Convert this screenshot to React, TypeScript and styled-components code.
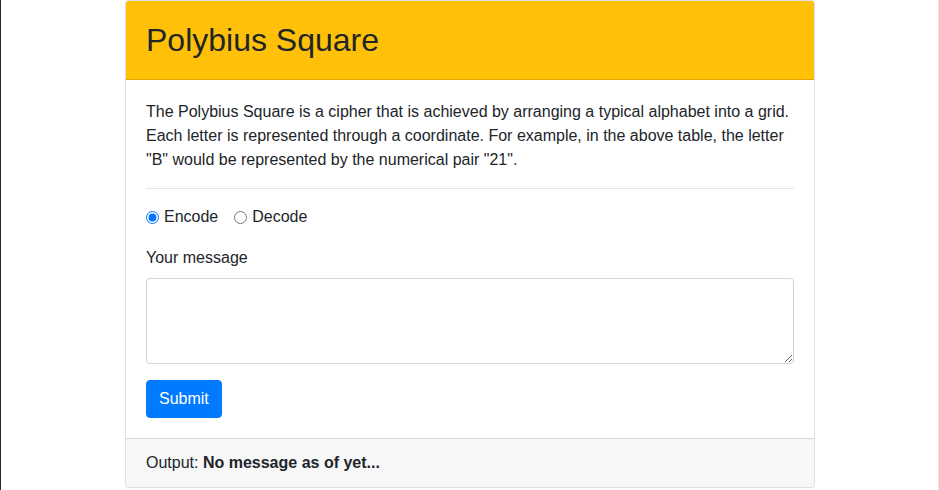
import React, { useState } from "react";
import styled, { createGlobalStyle } from "styled-components";

const GlobalStyle = createGlobalStyle`
  html, body { margin: 0; padding: 0; background: #fff; }
  body {
    font-family: "Liberation Sans", Arial, sans-serif;
    font-size: 16px;
    line-height: 1.5;
    color: #212529;
  }
  *, *::before, *::after { box-sizing: border-box; }
`;

const Frame = styled.div`
  min-height: 490px;
  width: 939px;
  border-left: 1px solid #2b2b2b;
  border-right: 1px solid #e2e2e2;
  padding-left: 1px;
`;

const Container = styled.div`
  width: 720px;
  margin: 0 auto;
  padding: 0 15px;
`;

const Card = styled.div`
  display: flex;
  flex-direction: column;
  background: #fff;
  border: 1px solid rgba(0, 0, 0, 0.125);
  border-radius: 4px;
  overflow: hidden;
`;

const CardHeader = styled.div`
  background: #ffc107;
  padding: 20px 20px;
  border-bottom: 1px solid rgba(0, 0, 0, 0.125);
`;

const Title = styled.h2`
  margin: 0;
  font-size: 32px;
  font-weight: 400;
  line-height: 1.2;
`;

const CardBody = styled.div`
  padding: 20px;
`;

const Text = styled.p`
  margin: 0 0 16px;
`;

const Divider = styled.hr`
  margin: 16px 0;
  border: 0;
  border-top: 1px solid rgba(0, 0, 0, 0.1);
`;

const RadioRow = styled.div`
  display: flex;
  align-items: center;
  height: 24px;
  margin-bottom: 17px;
`;

const RadioLabel = styled.label`
  display: inline-flex;
  align-items: center;
  margin-right: 16px;
  cursor: pointer;

  input {
    margin: 0 5px 0 0;
    width: 13px;
    height: 13px;
  }
`;

const Group = styled.div`
  margin-bottom: 16px;
`;

const FieldLabel = styled.label`
  display: block;
  margin-bottom: 8px;
`;

const TextArea = styled.textarea`
  display: block;
  width: 100%;
  height: 86px;
  padding: 6px 12px;
  font: inherit;
  color: #495057;
  border: 1px solid #ced4da;
  border-radius: 4px;
  resize: vertical;
  outline: none;
`;

const Button = styled.button`
  display: inline-block;
  background: #007bff;
  color: #fff;
  border: 1px solid #007bff;
  border-radius: 4px;
  padding: 6px 12px;
  font: inherit;
  line-height: 1.5;
  cursor: pointer;
`;

const CardFooter = styled.div`
  background: #f7f7f7;
  border-top: 1px solid rgba(0, 0, 0, 0.125);
  padding: 12px 20px;
`;

export default function App() {
  const [mode, setMode] = useState("encode");
  return (
    <>
      <GlobalStyle />
      <Frame>
        <Container>
          <Card>
            <CardHeader>
              <Title>Polybius Square</Title>
            </CardHeader>
            <CardBody>
              <Text>
                The Polybius Square is a cipher that is achieved by arranging a typical alphabet into a grid.
                Each letter is represented through a coordinate. For example, in the above table, the letter
                "B" would be represented by the numerical pair "21".
              </Text>
              <Divider />
              <RadioRow>
                <RadioLabel>
                  <input
                    type="radio"
                    name="mode"
                    checked={mode === "encode"}
                    onChange={() => setMode("encode")}
                  />
                  Encode
                </RadioLabel>
                <RadioLabel>
                  <input
                    type="radio"
                    name="mode"
                    checked={mode === "decode"}
                    onChange={() => setMode("decode")}
                  />
                  Decode
                </RadioLabel>
              </RadioRow>
              <Group>
                <FieldLabel htmlFor="msg">Your message</FieldLabel>
                <TextArea id="msg" rows={3} />
              </Group>
              <Button type="button">Submit</Button>
            </CardBody>
            <CardFooter>
              Output: <strong>No message as of yet...</strong>
            </CardFooter>
          </Card>
        </Container>
      </Frame>
    </>
  );
}
